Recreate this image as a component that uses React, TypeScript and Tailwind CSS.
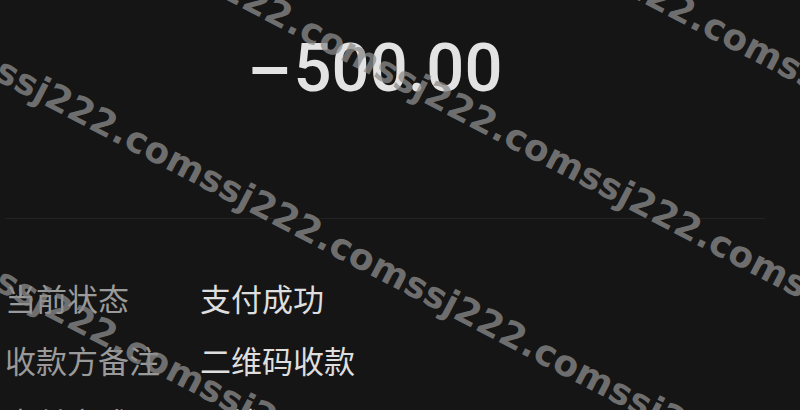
import React from "react";

const WM = "ssj222.com";

function WatermarkLine({ className, reps }: { className: string; reps: number }) {
  return (
    <div
      className={
        "absolute h-[40px] leading-[40px] whitespace-nowrap origin-[0_23px] rotate-[27.5deg] text-[36px] font-bold tracking-[0.3px] text-[rgba(140,140,140,0.76)] [font-family:'DejaVu_Sans',sans-serif] " +
        className
      }
    >
      {Array.from({ length: reps }).map((_, i) => (
        <span key={i}>{WM}</span>
      ))}
    </div>
  );
}

export default function App() {
  const rows = [
    ["当前状态", "支付成功"],
    ["收款方备注", "二维码收款"],
    ["支付方式", "零钱"],
  ];
  return (
    <div className="relative w-[800px] h-[410px] overflow-hidden bg-[#151515] [font-family:'Noto_Sans_CJK_SC',sans-serif]">
      <div className="flex flex-col w-[765px]">
        <div className="pt-[35px] pr-[12px] flex justify-center h-[103px] leading-none text-[67px] font-medium text-[#e3e3e3] [font-family:Roboto,'Noto_Sans',sans-serif]">
          <span className="inline-block w-[40px] mr-[3px] text-center scale-x-[2] scale-y-[1.1]">-</span>
          <span>500.00</span>
        </div>
        <div className="mt-[115px] ml-[5px] h-px bg-[#232323]" />
        <div className="mt-[48px] flex flex-col">
          {rows.map(([k, v]) => (
            <div key={k} className="flex items-center h-[62px] pl-[5px] text-[31px] leading-[62px]">
              <div className="w-[195px] text-[#9a9a9a]">{k}</div>
              <div className="text-[#dedede]">{v}</div>
            </div>
          ))}
        </div>
      </div>
      <WatermarkLine className="left-[-39px] top-[-385px]" reps={6} />
      <WatermarkLine className="left-[-33px] top-[-168px]" reps={6} />
      <WatermarkLine className="left-[-208px] top-[-59px]" reps={6} />
      <WatermarkLine className="left-[-208px] top-[151px]" reps={4} />
    </div>
  );
}
